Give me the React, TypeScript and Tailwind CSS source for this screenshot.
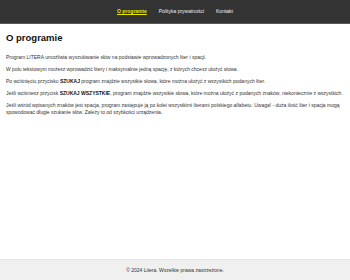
export default function App() {
  return (
    <div className="min-h-screen flex flex-col bg-white text-[#333] font-['Liberation_Sans',Arial,sans-serif] text-[5px] leading-[1.4]">
      <header className="h-[24px] bg-[#333] border-b-[1.5px] border-[#5a5a5a] flex items-center justify-center gap-[12px]">
        <a href="#" className="text-[#e6e600] font-bold underline">O programie</a>
        <a href="#" className="text-[#eee]">Polityka prywatności</a>
        <a href="#" className="text-[#eee]">Kontakt</a>
      </header>

      <main className="px-[6px] pt-[8px]">
        <h1 className="text-[9.5px] font-bold text-[#111] leading-[1.3] mb-[10px]">O programie</h1>
        <div className="flex flex-col gap-[5px]">
          <p>Program LITERA umożliwia wyszukiwanie słów na podstawie wprowadzonych liter i spacji.</p>
          <p>W polu tekstowym możesz wprowadzić litery i maksymalnie jedną spację, z których chcesz ułożyć słowa.</p>
          <p>
            Po wciśnięciu przycisku <b className="text-[#111]">SZUKAJ</b> program znajdzie wszystkie słowa, które można ułożyć z
            wszystkich podanych liter.
          </p>
          <p>
            Jeśli wciśniesz przycisk <b className="text-[#111]">SZUKAJ WSZYSTKIE</b>, program znajdzie wszystkie słowa, które
            można ułożyć z podanych znaków, niekoniecznie z wszystkich.
          </p>
          <p>
            Jeśli wśród wpisanych znaków jest spacja, program zastępuje ją po kolei wszystkimi literami polskiego alfabetu.
            Uwaga! - duża ilość liter i spacja mogą spowodować długie szukanie słów. Zależy to od szybkości urządzenia.
          </p>
        </div>
      </main>

      <footer className="mt-auto h-[21px] bg-[#f0f0f0] border-t border-[#e4e4e4] flex items-center justify-center">
        © 2024 Litera. Wszelkie prawa zastrzeżone.
      </footer>
    </div>
  )
}
